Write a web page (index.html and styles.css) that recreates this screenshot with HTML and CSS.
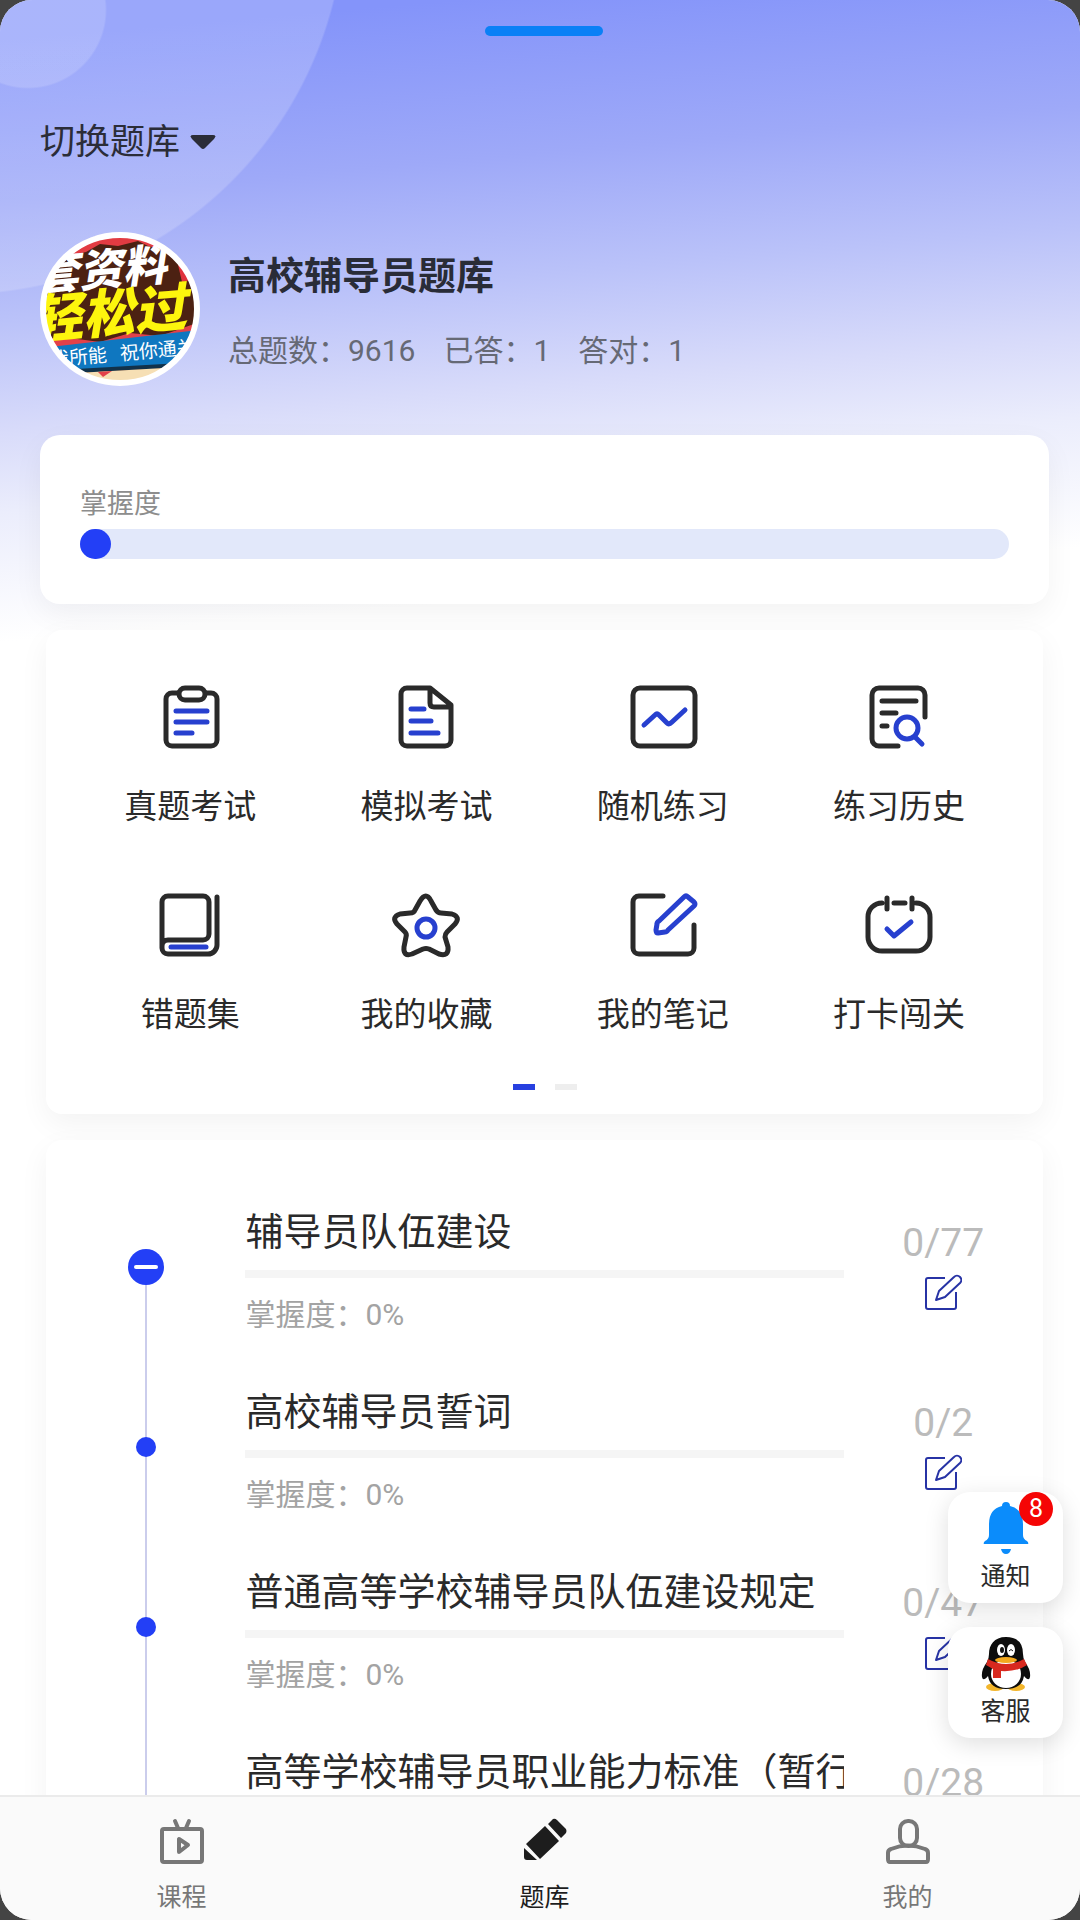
FILE: index.html
```html
<!DOCTYPE html>
<html lang="zh-CN">
	<head>
		<meta charset="utf-8">
		<title>题库</title>
		<meta name="viewport" content="width=device-width, initial-scale=1.0">
		<link rel="stylesheet" href="styles.css">
	</head>
	<body>
		<svg class="defs" aria-hidden="true">
			<symbol id="edit" viewBox="0 0 38 38">
				<path d="M21 4H4a2 2 0 0 0-2 2v27a2 2 0 0 0 2 2h26a2 2 0 0 0 2-2V18"/>
				<path d="M12 26l3-9L30 3a4 4 0 0 1 6 6L21 23z"/>
			</symbol>
		</svg>
		<div class="screen">
			<div class="app">
				<main class="main">
					<header class="header">
						<button class="switch-btn" type="button">切换题库
							<svg class="arrow" viewBox="0 0 26 16" aria-hidden="true"><path d="M3 0h20q4 0 1 4l-9 9q-2 2-4 0L2 4Q-1 0 3 0z"/></svg>
						</button>
						<div class="profile">
							<svg class="avatar" viewBox="0 0 160 154" aria-hidden="true">
								<clipPath id="round"><ellipse cx="80" cy="77" rx="79" ry="76"/></clipPath>
								<g clip-path="url(#round)">
									<rect width="160" height="154" fill="#4c2112"/>
									<path d="M20 26L40 0H112L126 18 108 14 98 9 78 14 60 12 46 20z" fill="#e23b42"/>
									<path d="M136 24L160 16V46L142 50z" fill="#e0323c"/>
									<path d="M0 106L30 106 60 110 90 101 120 104 160 90V106L0 122z" fill="#e2414a"/>
									<path d="M0 116L160 98V134L0 142z" fill="#0f77c0"/>
									<path d="M0 139L160 130V134L0 143z" fill="#12324a"/>
									<path d="M0 143L160 134V154H0z" fill="#f6dfb4"/>
									<path d="M58 140L72 139 63 145z" fill="#e2414a"/>
									<g transform="rotate(-5 80 77)">
										<text class="av-top" x="-2" y="52">套资料</text>
										<text class="av-mid" x="-10" y="99">轻松过</text>
										<text class="av-low" x="6" y="128">我所能</text>
										<text class="av-low" x="76" y="128">祝你通关</text>
									</g>
								</g>
								<ellipse cx="80" cy="77" rx="77" ry="74" fill="none" stroke="#fff" stroke-width="6"/>
							</svg>
							<div>
								<h1 class="title">高校辅导员题库</h1>
								<div class="stats">
									<span>总题数：9616</span>
									<span>已答：1</span>
									<span>答对：1</span>
								</div>
							</div>
						</div>
					</header>

					<section class="card mastery">
						<div class="mastery-label">掌握度</div>
						<div class="mastery-bar"><div class="mastery-value"></div></div>
					</section>

					<section class="card menu">
						<div class="menu-grid">
							<a class="menu-item" href="#">
								<svg class="icon" viewBox="0 0 68 64" aria-hidden="true">
									<rect x="10" y="8" width="51" height="53" rx="6"/>
									<rect x="23" y="3" width="26" height="12" rx="6" fill="#fff"/>
									<path class="blue" d="M20 26H51M20 37H51M20 48H36"/>
								</svg>
								<span>真题考试</span>
							</a>
							<a class="menu-item" href="#">
								<svg class="icon" viewBox="0 0 68 64" aria-hidden="true">
									<path d="M38 3H15a6 6 0 0 0-6 6V55a6 6 0 0 0 6 6H53a6 6 0 0 0 6-6V20zM38 3V18q0 4 4 4H59"/>
									<path class="blue" d="M19 24H32M19 36H39M19 48H46"/>
								</svg>
								<span>模拟考试</span>
							</a>
							<a class="menu-item" href="#">
								<svg class="icon" viewBox="0 0 68 64" aria-hidden="true">
									<rect x="4" y="3" width="62" height="58" rx="7"/>
									<path class="blue" d="M15 40L26 30Q28 28 30 30L38 38Q40 40 43 37L56 25"/>
								</svg>
								<span>随机练习</span>
							</a>
							<a class="menu-item" href="#">
								<svg class="icon" viewBox="0 0 68 64" aria-hidden="true">
									<path d="M60 32V10a7 7 0 0 0-7-7H14a7 7 0 0 0-7 7V54a7 7 0 0 0 7 7H33"/>
									<path d="M17 16H51M17 28H31M17 41H22"/>
									<circle class="blue" cx="42" cy="43" r="11"/>
									<path class="blue" d="M50 52L57 59"/>
								</svg>
								<span>练习历史</span>
							</a>
							<a class="menu-item" href="#">
								<svg class="icon" viewBox="0 0 68 64" aria-hidden="true">
									<path d="M6 54V9a6 6 0 0 1 6-6H47a6 6 0 0 1 6 6V41a6 6 0 0 1-6 6H12a6 6 0 0 0-6 6v2a6 6 0 0 0 6 6H52a9 9 0 0 0 9-9V4"/>
									<path class="blue" d="M15 54H50"/>
								</svg>
								<span>错题集</span>
							</a>
							<a class="menu-item" href="#">
								<svg class="icon" viewBox="0 0 68 64" aria-hidden="true">
									<path d="M28 8Q34 -2 39 8L44 17Q46 20 49 20L60 21Q69 24 63 31L55 39Q53 41 53 44L56 54Q57 64 47 61L37 56Q34 55 31 56L20 61Q11 64 12 54L14 44Q15 41 13 39L5 31Q-1 24 8 21L18 20Q22 20 23 17z"/>
									<circle class="blue" cx="34" cy="35" r="9"/>
								</svg>
								<span>我的收藏</span>
							</a>
							<a class="menu-item" href="#">
								<svg class="icon" viewBox="0 0 68 64" aria-hidden="true">
									<path d="M34 3H10a6 6 0 0 0-6 6V55a6 6 0 0 0 6 6H59a6 6 0 0 0 6-6V32"/>
									<path class="blue" d="M55 4Q57 2 59 4L65 9Q67 11 65 13L39 37Q38 39 36 39L29 40Q27 40 27 37L28 31Q28 29 30 28z"/>
								</svg>
								<span>我的笔记</span>
							</a>
							<a class="menu-item" href="#">
								<svg class="icon" viewBox="0 0 68 64" aria-hidden="true">
									<path d="M17 10A14 14 0 0 0 3 24V44A14 14 0 0 0 17 58H51A14 14 0 0 0 65 44V24A14 14 0 0 0 51 10M29 10H40M22 5V16M47 5V16"/>
									<path class="blue" d="M22 36L29 43 46 29"/>
								</svg>
								<span>打卡闯关</span>
							</a>
						</div>
						<div class="pager"><span class="page active"></span><span class="page"></span></div>
					</section>

					<section class="card chapters">
						<div class="chapter">
							<div class="rail"><button class="toggle" type="button" aria-label="收起"></button></div>
							<div class="info">
								<h2 class="name">辅导员队伍建设</h2>
								<div class="bar"></div>
								<div class="rate">掌握度：0%</div>
							</div>
							<div class="side">
								<span class="count">0/77</span>
								<a href="#" aria-label="练习"><svg class="edit"><use href="#edit"/></svg></a>
							</div>
						</div>
						<div class="chapter">
							<div class="rail"><span class="dot"></span></div>
							<div class="info">
								<h2 class="name">高校辅导员誓词</h2>
								<div class="bar"></div>
								<div class="rate">掌握度：0%</div>
							</div>
							<div class="side">
								<span class="count">0/2</span>
								<a href="#" aria-label="练习"><svg class="edit"><use href="#edit"/></svg></a>
							</div>
						</div>
						<div class="chapter">
							<div class="rail"><span class="dot"></span></div>
							<div class="info">
								<h2 class="name">普通高等学校辅导员队伍建设规定</h2>
								<div class="bar"></div>
								<div class="rate">掌握度：0%</div>
							</div>
							<div class="side">
								<span class="count">0/47</span>
								<a href="#" aria-label="练习"><svg class="edit"><use href="#edit"/></svg></a>
							</div>
						</div>
						<div class="chapter">
							<div class="rail"></div>
							<div class="info">
								<h2 class="name">高等学校辅导员职业能力标准（暂行</h2>
							</div>
							<div class="side">
								<span class="count">0/28</span>
							</div>
						</div>
					</section>
				</main>

				<nav class="tabs">
					<a class="tab" href="#">
						<svg class="tab-icon" viewBox="0 0 46 48" aria-hidden="true">
							<rect x="3" y="12" width="40" height="33" rx="2"/>
							<path d="M16 4L19 11M30 4L27 11M20 22V35L29 28z"/>
						</svg>
						<span>课程</span>
					</a>
					<a class="tab current" href="#">
						<svg class="tab-icon solid" viewBox="0 0 46 48" aria-hidden="true">
							<path d="M26 7L31 2Q33 1 35 3L44 12Q45 14 44 16L39 21zM23 9L37 24 18 42 4 27zM2 31L15 43H5Q2 43 2 40z"/>
						</svg>
						<span>题库</span>
					</a>
					<a class="tab" href="#">
						<svg class="tab-icon" viewBox="0 0 46 48" aria-hidden="true">
							<rect x="15" y="4" width="17" height="25" rx="8"/>
							<path d="M3 42V36Q3 33 6 32Q23 25 40 32Q43 33 43 36V42Q43 45 41 45H5Q3 45 3 42z"/>
						</svg>
						<span>我的</span>
					</a>
				</nav>
			</div>

			<div class="handle"></div>

			<div class="floats">
				<a class="float" href="#">
					<svg class="float-icon" viewBox="0 0 50 56" aria-hidden="true">
						<path fill="#0b8cfb" d="M21 5a4 4 0 0 1 8 0q13 3 13 18v11q0 4 4 6 2 2 1 3H3q-1-1 1-3 4-2 4-6V23Q8 8 21 5zM20 48H30Q29 53 25 53T20 48z"/>
					</svg>
					<span>通知</span>
					<span class="badge">8</span>
				</a>
				<a class="float" href="#">
					<svg class="float-icon" viewBox="0 0 50 56" aria-hidden="true">
						<ellipse cx="14" cy="51" rx="9" ry="4" fill="#f3b62c"/>
						<ellipse cx="35" cy="51" rx="9" ry="4" fill="#f3b62c"/>
						<path fill="#0c0c0c" d="M25 1C13 1 8 9 8 18q0 4-2 8Q0 34 1 41q1 5 6-1 2 13 18 13t18-13q5 6 6 1 1-7-5-15-2-4-2-8Q42 1 25 1z"/>
						<ellipse cx="25" cy="38" rx="15" ry="14" fill="#fff"/>
						<path fill="#d8291f" d="M7 23Q25 33 43 23L46 29Q36 36 20 35V42H12V33L5 29z"/>
						<ellipse cx="20" cy="14" rx="4" ry="6" fill="#fff"/>
						<ellipse cx="30" cy="14" rx="4" ry="6" fill="#fff"/>
						<ellipse cx="21" cy="14" rx="2" ry="3" fill="#111"/>
						<path d="M28 15q2-3 4 0" fill="none" stroke="#111" stroke-width="1"/>
						<ellipse cx="25" cy="24" rx="11" ry="3" fill="#f3a91e"/>
					</svg>
					<span>客服</span>
				</a>
			</div>
		</div>
	</body>
</html>
```
FILE: styles.css
```css
* {
	box-sizing: border-box;
}
body {
	margin: 0;
	background: #444;
	color: #2a2a2a;
	font-family: Roboto, "Noto Sans CJK SC", sans-serif;
}
a {
	color: inherit;
	text-decoration: none;
}
h1, h2 {
	margin: 0;
}
.defs {
	display: none;
}
.screen {
	position: relative;
	height: 100vh;
	overflow: hidden;
	border-radius: 32px;
	background: #fff;
}
.app {
	display: flex;
	flex-direction: column;
	height: 100%;
	margin-right: -9px;
}
.main {
	flex: 1;
	min-height: 0;
	overflow: hidden;
	background:
		radial-gradient(circle at 28px 10px, rgba(255,255,255,.16) 77px, transparent 79px),
		radial-gradient(circle at -41px -92px, rgba(255,255,255,.18) 385px, transparent 387px),
		linear-gradient(175deg, #8494fa 40px, #9ea9f8 200px, #bac2f9 320px, #d8dbfa 430px, #ebedfc 510px, #fff 640px) no-repeat;
}
.handle {
	position: absolute;
	top: 26px;
	left: 50%;
	width: 118px;
	height: 10px;
	margin-left: -55px;
	border-radius: 5px;
	background: #0a80f6;
}

.header {
	padding: 118px 40px 49px;
}
.switch-btn {
	display: flex;
	align-items: center;
	gap: 10px;
	padding: 0;
	border: none;
	background: none;
	color: #2b2d38;
	font: inherit;
	font-size: 35px;
	line-height: 50px;
	cursor: pointer;
}
.arrow {
	width: 26px;
	height: 16px;
	fill: #2b2d38;
}
.profile {
	display: flex;
	align-items: center;
	gap: 28px;
	margin-top: 64px;
}
.avatar {
	width: 160px;
	height: 154px;
}
.av-top, .av-mid {
	font-weight: 900;
	font-style: italic;
}
.av-top {
	fill: #fff;
	font-size: 44px;
}
.av-mid {
	fill: #fdf50d;
	font-size: 52px;
}
.av-low {
	fill: #fff;
	font-size: 19px;
}
.title {
	padding-top: 4px;
	color: #292c37;
	font-size: 38px;
	line-height: 50px;
}
.stats {
	display: flex;
	gap: 28px;
	margin-top: 30px;
	color: #666975;
	font-size: 30px;
	line-height: 40px;
}

.card {
	border-radius: 16px;
	background: #fff;
	box-shadow: 0 10px 30px rgba(0,0,0,.05);
}
.mastery {
	margin: 0 40px 26px;
	padding: 49px 40px 45px;
	border-radius: 20px;
}
.mastery-label {
	margin-bottom: 5px;
	color: #8d8d8d;
	font-size: 27px;
	line-height: 40px;
}
.mastery-bar {
	height: 30px;
	border-radius: 15px;
	background: #e2e8fa;
}
.mastery-value {
	width: 31px;
	height: 30px;
	border-radius: 15px;
	background: #233ff6;
}

.menu {
	margin: 0 46px 26px;
	padding: 55px 26px 24px;
}
.menu-grid {
	display: grid;
	grid-template-columns: repeat(4, 1fr);
	row-gap: 64px;
}
.menu-item {
	display: flex;
	flex-direction: column;
	align-items: center;
	gap: 36px;
	font-size: 33px;
	line-height: 44px;
}
.icon {
	width: 68px;
	height: 64px;
	overflow: visible;
	fill: none;
	stroke: #2a2a2a;
	stroke-width: 5;
	stroke-linecap: round;
	stroke-linejoin: round;
}
.icon .blue {
	stroke: #2740cf;
}
.pager {
	display: flex;
	justify-content: center;
	gap: 20px;
	margin-top: 47px;
}
.page {
	width: 22px;
	height: 6px;
	background: #eee;
}
.page.active {
	background: #2740e0;
}

.chapters {
	margin: 0 46px;
	padding-top: 37px;
}
.chapter {
	display: grid;
	grid-template-columns: 1fr 3fr 1fr;
	height: 180px;
}
.rail {
	display: flex;
	align-items: center;
	justify-content: center;
	background: linear-gradient(#cbcdec, #cbcdec) center / 2px 100% no-repeat;
}
.chapter:first-child .rail {
	background-position: bottom;
	background-size: 2px 50%;
}
.toggle {
	display: flex;
	align-items: center;
	justify-content: center;
	width: 36px;
	height: 36px;
	padding: 0;
	border: none;
	border-radius: 50%;
	background: #233ff6;
	cursor: pointer;
}
.toggle::before {
	content: "";
	width: 24px;
	height: 4px;
	border-radius: 2px;
	background: #fff;
}
.dot {
	width: 20px;
	height: 20px;
	border-radius: 50%;
	background: #233ff6;
}
.info {
	padding-top: 28px;
	overflow: hidden;
}
.name {
	font-size: 38px;
	font-weight: 400;
	line-height: 54px;
	white-space: nowrap;
}
.bar {
	height: 8px;
	margin: 11px 0 15px;
	background: #f5f5f5;
}
.rate {
	color: #a3a3a3;
	font-size: 30px;
	line-height: 44px;
}
.side {
	display: flex;
	flex-direction: column;
	align-items: center;
	gap: 6px;
	padding-top: 41px;
}
.count {
	color: #bbb;
	font-size: 39px;
	line-height: 50px;
}
.edit {
	display: block;
	width: 38px;
	height: 38px;
	fill: none;
	stroke: #2733a5;
	stroke-width: 2;
	stroke-linejoin: round;
}

.tabs {
	display: flex;
	border-top: 2px solid #ebebeb;
	background: #fafafa;
}
.tab {
	display: flex;
	flex: 1;
	flex-direction: column;
	align-items: center;
	gap: 16px;
	padding: 20px 0 5px;
	color: #777;
	font-size: 25px;
	line-height: 34px;
}
.tab.current {
	color: #1d1d1d;
}
.tab-icon {
	width: 46px;
	height: 48px;
	fill: none;
	stroke: currentColor;
	stroke-width: 4;
	stroke-linecap: round;
	stroke-linejoin: round;
}
.tab-icon.solid {
	fill: currentColor;
	stroke: none;
}

/* floating shortcuts over the list */
.floats {
	position: absolute;
	right: 17px;
	bottom: 182px;
	display: flex;
	flex-direction: column;
	gap: 24px;
}
.float {
	position: relative;
	display: flex;
	flex-direction: column;
	align-items: center;
	gap: 3px;
	width: 115px;
	padding: 9px 0 9px;
	border-radius: 22px;
	background: #fff;
	box-shadow: 0 6px 24px rgba(0,0,0,.13);
	font-size: 25px;
	line-height: 34px;
}
.float-icon {
	width: 50px;
	height: 56px;
}
.badge {
	position: absolute;
	top: 0;
	right: 10px;
	width: 34px;
	height: 34px;
	border-radius: 50%;
	background: #f50505;
	color: #fff;
	text-align: center;
}
```
